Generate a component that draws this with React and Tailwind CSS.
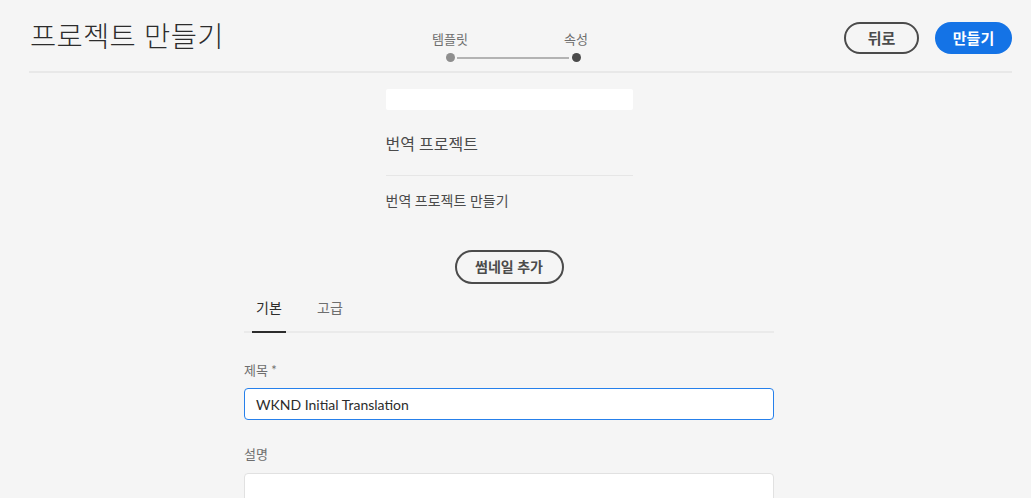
export default function App() {
  return (
    <div className="w-[1031px] h-[498px] bg-[#f5f5f5] overflow-hidden text-[#4b4b4b] font-['Lato','Noto_Sans_CJK_KR',sans-serif]">
      {/* Header */}
      <div className="ml-[29px] w-[983px] h-[73px] border-b-2 border-[#e8e8e8] flex items-start">
        <h1 className="w-[196px] mt-[16px] ml-px text-[28.5px] leading-[40px] font-light text-[#2c2c2c] tracking-[0.3px] whitespace-nowrap">
          프로젝트 만들기
        </h1>
        <div className="ml-[202px] mt-[30px] flex items-start">
          <div className="w-[44px] flex flex-col items-center">
            <span className="text-[13px] leading-[18px] text-[#6e6e6e]">템플릿</span>
            <span className="mt-[5px] w-[9px] h-[9px] rounded-full bg-[#8e8e8e]" />
          </div>
          <span className="mt-[27px] -mx-[15px] w-[112px] h-[2px] bg-[#b3b3b3]" />
          <div className="w-[44px] flex flex-col items-center">
            <span className="text-[13px] leading-[18px] text-[#6e6e6e]">속성</span>
            <span className="mt-[5px] w-[9px] h-[9px] rounded-full bg-[#4b4b4b]" />
          </div>
        </div>
        <div className="ml-auto mt-[22px] flex gap-[16px]">
          <button className="w-[75px] h-[32px] rounded-full border-2 border-[#4b4b4b] text-[15px] font-bold text-[#4b4b4b] leading-none">
            뒤로
          </button>
          <button className="w-[77px] h-[32px] rounded-full bg-[#1473e6] text-[15px] font-bold text-white leading-none">
            만들기
          </button>
        </div>
      </div>

      {/* Content */}
      <div className="w-[1018px] flex flex-col items-center">
        <div className="w-[247px] mt-[16px]">
          <div className="h-[21px] bg-white rounded-[2px]" />
          <div className="mt-[23px] text-[16px] leading-[22px] text-[#4b4b4b]">번역 프로젝트</div>
          <div className="mt-[20px] border-t border-[#e6e6e6]" />
          <div className="mt-[15px] text-[14px] leading-[20px] text-[#4b4b4b]">번역 프로젝트 만들기</div>
        </div>
        <button className="mt-[39px] w-[109px] h-[34px] rounded-full border-2 border-[#4b4b4b] text-[14px] font-bold text-[#4b4b4b] leading-none">
          썸네일 추가
        </button>
        <div className="w-[530px] mt-[11px]">
          <div className="flex border-b-2 border-[#eaeaea] h-[38px] text-[14px]">
            <div className="ml-[8px] w-[34px] flex justify-center pt-[2px] text-[#2c2c2c] border-b-2 border-[#2c2c2c] -mb-[2px]">
              기본
            </div>
            <div className="ml-[31px] pt-[2px] text-[#6e6e6e]">고급</div>
          </div>
          <div className="mt-[28px] text-[13px] leading-[18px] text-[#6e6e6e]">제목 *</div>
          <div className="mt-[9px] h-[32px] bg-white border border-[#2680eb] rounded-[4px] flex items-center px-[11px] text-[14px] text-[#2c2c2c]">
            WKND Initial Translation
          </div>
          <div className="mt-[25px] text-[13px] leading-[18px] text-[#6e6e6e]">설명</div>
          <div className="mt-[10px] h-[60px] bg-white border border-[#e1e1e1] rounded-[4px]" />
        </div>
      </div>
    </div>
  );
}
